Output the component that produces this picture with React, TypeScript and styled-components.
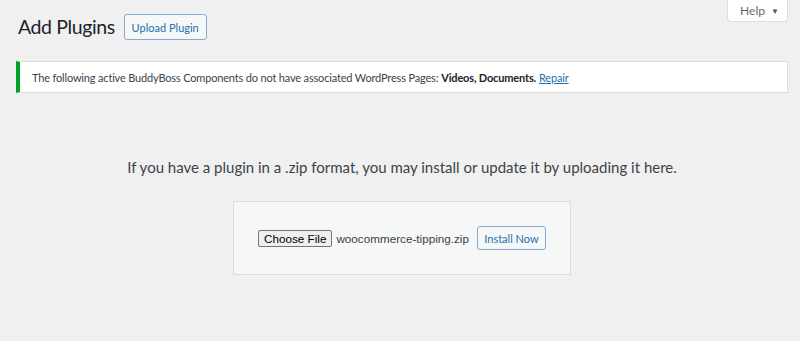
import React from 'react';
import styled, { createGlobalStyle } from 'styled-components';

const GlobalStyle = createGlobalStyle`
  body {
    margin: 0;
    background: #f0f0f1;
    font-family: Lato, 'Noto Sans', sans-serif;
    color: #1d2327;
  }
`;

const Page = styled.div`
  width: 800px;
  height: 341px;
  padding: 0 12px 0 16px;
  box-sizing: border-box;
  overflow: hidden;
`;

const ScreenMeta = styled.div`
  float: right;
`;

const HelpTab = styled.button`
  width: 61px;
  height: 22px;
  padding: 0 0 0 4px;
  background: #fff;
  border: 1px solid #dcdcde;
  border-top: none;
  border-radius: 0 0 4px 4px;
  font-family: inherit;
  font-size: 12px;
  color: #646970;
  display: flex;
  align-items: center;
  justify-content: center;
  gap: 6px;
`;

const Caret = styled.span`
  font-size: 8px;
  color: #50575e;
`;

const TitleRow = styled.div`
  display: flex;
  align-items: center;
  gap: 9px;
  padding: 14px 0 0 2px;
`;

const Title = styled.h1`
  margin: 0;
  font-size: 19.5px;
  letter-spacing: -0.4px;
  font-weight: 400;
  line-height: 26px;
  color: #1d2327;
`;

const OutlineButton = styled.button<{ $h: number; $w: number }>`
  width: ${(p) => p.$w}px;
  height: ${(p) => p.$h}px;
  padding: 0;
  background: #f6f7f7;
  border: 1px solid #86aad0;
  border-radius: 3px;
  font-family: inherit;
  font-size: 11px;
  color: #2271b1;
  white-space: nowrap;
`;

const Notice = styled.div`
  margin-top: 21px;
  height: 32px;
  background: #fff;
  border: 1px solid #dcdcde;
  border-left: 4px solid #00a32a;
  box-sizing: border-box;
  display: flex;
  align-items: center;
  padding-left: 12px;
  font-size: 11px;
  letter-spacing: -0.17px;
  color: #3c434a;
  white-space: nowrap;
`;

const Strong = styled.b`
  font-weight: 700;
  color: #1d2327;
  margin: 0 3px;
`;

const Link = styled.a`
  color: #2271b1;
  text-decoration: underline;
`;

const Intro = styled.p`
  margin: 65px 0 0;
  text-align: center;
  font-size: 15px;
  color: #3c434a;
`;

const UploadBox = styled.form`
  margin: 25px auto 0;
  width: 338px;
  height: 74px;
  box-sizing: border-box;
  background: #f6f7f7;
  border: 1px solid #dcdcde;
  display: flex;
  align-items: center;
  justify-content: center;
  gap: 8px;
`;

const FileField = styled.div`
  display: flex;
  align-items: center;
  gap: 4px;
  font-family: 'Liberation Sans', Arial, sans-serif;
  font-size: 11.7px;
  color: #3c434a;
`;

const ChooseButton = styled.span`
  height: 17px;
  padding: 0 5px;
  box-sizing: border-box;
  background: #efefef;
  border: 1px solid #767676;
  border-radius: 2px;
  display: flex;
  align-items: center;
  font-size: 11.7px;
  color: #000;
`;

export default function App() {
  return (
    <Page>
      <GlobalStyle />
      <ScreenMeta>
        <HelpTab>
          Help <Caret>▼</Caret>
        </HelpTab>
      </ScreenMeta>
      <TitleRow>
        <Title>Add Plugins</Title>
        <OutlineButton $w={83} $h={26}>Upload Plugin</OutlineButton>
      </TitleRow>
      <Notice>
        The following active BuddyBoss Components do not have associated WordPress Pages:
        <Strong>Videos, Documents.</Strong>
        <Link href="#">Repair</Link>
      </Notice>
      <Intro>If you have a plugin in a .zip format, you may install or update it by uploading it here.</Intro>
      <UploadBox>
        <FileField>
          <ChooseButton>Choose File</ChooseButton>
          woocommerce-tipping.zip
        </FileField>
        <OutlineButton $w={69} $h={24}>Install Now</OutlineButton>
      </UploadBox>
    </Page>
  );
}
